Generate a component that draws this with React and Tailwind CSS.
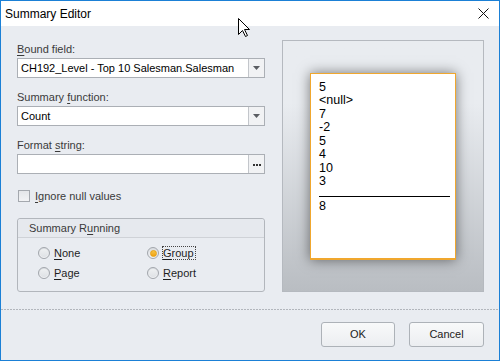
import React from "react";

function Arrow() {
  return (
    <svg width="7" height="4" viewBox="0 0 7 4">
      <path d="M0 0H7L3.5 4z" fill="#5a5d62" />
    </svg>
  );
}

function Radio({ checked }) {
  return (
    <span className="w-[12px] h-[12px] rounded-full border border-[#a2a6ac] bg-gradient-to-b from-[#d9dce0] to-[#f3f4f6] flex items-center justify-center shrink-0">
      {checked ? (
        <span className="w-[7px] h-[7px] rounded-full bg-gradient-to-b from-[#f6c342] to-[#f0a30a] border border-[#e8a010]" />
      ) : (
        <span className="w-[8px] h-[8px] rounded-full bg-gradient-to-b from-[#eef0f2] to-[#dfe2e6]" />
      )}
    </span>
  );
}

export default function App() {
  const values = ["5", "<null>", "7", "-2", "5", "4", "10", "3"];

  return (
    <div className="w-[500px] h-[361px] flex flex-col border border-[#1b80d6] bg-[#e9ecf1] font-['Liberation_Sans',Arial,sans-serif] text-[#1e1e1e] relative overflow-hidden">
      {/* Title bar */}
      <div className="h-[25px] shrink-0 bg-white flex items-center justify-between pl-[4px] pr-[10px]">
        <span className="text-[12px] text-black">Summary Editor</span>
        <svg width="11" height="11" viewBox="0 0 11 11">
          <path d="M0.5 0.5L10.5 10.5M10.5 0.5L0.5 10.5" stroke="#111" strokeWidth="1" />
        </svg>
      </div>

      <div className="flex-1 flex flex-col">
        <div className="flex pl-[16px] pr-[15px] pt-[14px] gap-[17px]">
          {/* Left column */}
          <div className="w-[248px] pt-[1px] flex flex-col text-[11px]">
            <div className="h-[17px] leading-[17px] text-[#3a3a3a]">
              <span className="underline underline-offset-2">B</span>ound field:
            </div>
            <div className="h-[20px] flex border border-[#abafb5] bg-white">
              <div className="flex-1 pl-[3px] leading-[18px] text-black">CH192_Level - Top 10 Salesman.Salesman</div>
              <div className="w-[16px] border-l border-[#c3c6cb] bg-[#f1f2f4] flex items-center justify-center">
                <Arrow />
              </div>
            </div>

            <div className="mt-[11px] h-[17px] leading-[17px] text-[#3a3a3a]">
              Summary <span className="underline underline-offset-2">f</span>unction:
            </div>
            <div className="h-[20px] flex border border-[#abafb5] bg-white">
              <div className="flex-1 pl-[3px] leading-[18px] text-black">Count</div>
              <div className="w-[16px] border-l border-[#c3c6cb] bg-[#f1f2f4] flex items-center justify-center">
                <Arrow />
              </div>
            </div>

            <div className="mt-[11px] h-[17px] leading-[17px] text-[#3a3a3a]">
              Format <span className="underline underline-offset-2">s</span>tring:
            </div>
            <div className="h-[20px] flex border border-[#abafb5] bg-white">
              <div className="flex-1" />
              <div className="w-[16px] border-l border-[#c3c6cb] bg-[#f1f2f4] flex items-center justify-center gap-[1px] pt-[2px]">
                <span className="w-[2px] h-[2px] bg-[#333]" />
                <span className="w-[2px] h-[2px] bg-[#333]" />
                <span className="w-[2px] h-[2px] bg-[#333]" />
              </div>
            </div>

            <div className="mt-[16px] h-[12px] flex items-center gap-[5px] ml-px">
              <span className="w-[12px] h-[12px] border border-[#a4a8ae] bg-gradient-to-b from-[#e4e6e9] to-[#f2f3f5]" />
              <span className="text-[#3a3a3a]">
                <span className="underline underline-offset-2">I</span>gnore null values
              </span>
            </div>

            <div className="mt-[16px] h-[74px] border border-[#b2b6bc] rounded-[3px] flex flex-col">
              <div className="h-[19px] border-b border-[#cfd2d7] bg-[#e6e9ee] pl-[11px] leading-[18px] text-[#3a3a3a] rounded-t-[3px]">
                Summary R<span className="underline underline-offset-2">u</span>nning
              </div>
              <div className="pl-[20px] pt-[9px] grid grid-cols-[109px_1fr] gap-y-[8px]">
                <div className="h-[12px] flex items-center gap-[4px]">
                  <Radio />
                  <span><span className="underline underline-offset-2">N</span>one</span>
                </div>
                <div className="h-[12px] flex items-center gap-[3px]">
                  <Radio checked />
                  <span className="border border-dotted border-[#444] leading-[12px] pr-px">
                    <span className="underline underline-offset-2">G</span>roup
                  </span>
                </div>
                <div className="h-[12px] flex items-center gap-[4px]">
                  <Radio />
                  <span><span className="underline underline-offset-2">P</span>age</span>
                </div>
                <div className="h-[12px] flex items-center gap-[4px]">
                  <Radio />
                  <span><span className="underline underline-offset-2">R</span>eport</span>
                </div>
              </div>
            </div>
          </div>

          {/* Preview panel */}
          <div className="w-[202px] h-[252px] border border-[#b5b9bf] bg-gradient-to-b from-[#e9ecf0] from-25% to-[#b9bdc2] flex items-center justify-center">
            <div className="w-[146px] h-[187px] bg-white border border-[#f0a72e] border-b-2 shadow-[0_0_12px_rgba(0,0,0,0.5)] pl-[8px] pr-[5px] pt-[7px] text-[12.5px] leading-[13.5px] text-black">
              {values.map((v, i) => (
                <div key={i}>{v}</div>
              ))}
              <div className="mt-[7px] h-px bg-black" />
              <div className="mt-[3px]">8</div>
            </div>
          </div>
        </div>

        <div className="mt-[17px] h-px w-full bg-[repeating-linear-gradient(90deg,#b2b6bc_0_2px,transparent_2px_3px)]" />

        <div className="mt-[12px] flex justify-end gap-[14px] pr-[15px] text-[11px]">
          <button className="w-[74px] h-[25px] border border-[#adb2b8] rounded-[3px] bg-gradient-to-b from-[#f8f9fa] to-[#eceef1] text-[#222]">
            OK
          </button>
          <button className="w-[75px] h-[25px] border border-[#adb2b8] rounded-[3px] bg-gradient-to-b from-[#f8f9fa] to-[#eceef1] text-[#222]">
            Cancel
          </button>
        </div>
      </div>

      {/* Mouse cursor */}
      <svg className="absolute left-[237px] top-[17px]" width="13" height="20" viewBox="0 0 13 20">
        <path d="M0.5 0.5V16.5L4.5 12.5L7.5 18.5L9.5 17.5L6.5 11.5H11.5Z" fill="white" stroke="black" strokeWidth="1" strokeLinejoin="miter" />
      </svg>
    </div>
  );
}
